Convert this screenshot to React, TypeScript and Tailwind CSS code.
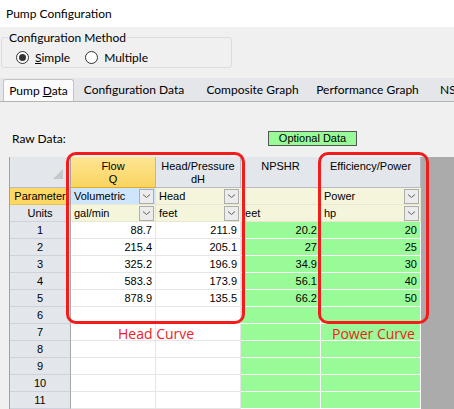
import React from 'react'

// ── Data ─────────────────────────────────────────────────────

const rows: [string, string, string, string][] = [
  ['88.7', '211.9', '20.2', '20'],
  ['215.4', '205.1', '27', '25'],
  ['325.2', '196.9', '34.9', '30'],
  ['583.3', '173.9', '56.1', '40'],
  ['878.9', '135.5', '66.2', '50'],
  ['', '', '', ''],
  ['', '', '', ''],
  ['', '', '', ''],
  ['', '', '', ''],
  ['', '', '', ''],
  ['', '', '', ''],
]

const tabs = [
  { label: 'Configuration Data', w: 'w-[120px]' },
  { label: 'Composite Graph', w: 'w-[117px]' },
  { label: 'Performance Graph', w: 'w-[113px]' },
]

// ── Small parts ──────────────────────────────────────────────

function Radio({ checked }: { checked?: boolean }) {
  return (
    <span className="flex size-[13px] shrink-0 items-center justify-center rounded-full border border-[#333] bg-white">
      {checked && <span className="size-[7px] rounded-full bg-[#333]" />}
    </span>
  )
}

function DropBtn() {
  return (
    <span className="ml-auto mr-[1px] flex h-[15px] w-[15px] shrink-0 items-center justify-center border border-[#adadad] bg-[#ececec]">
      <svg width="9" height="6" viewBox="0 0 9 6">
        <path d="M1 1.5 L4.5 4.5 L8 1.5" fill="none" stroke="#606060" strokeWidth="1" />
      </svg>
    </span>
  )
}

function RowHead({ children, yellow }: { children?: React.ReactNode; yellow?: boolean }) {
  return (
    <div
      className={`flex h-[17px] items-center justify-center overflow-hidden whitespace-nowrap border-r border-b border-r-[#a7a7a7] ${
        yellow ? 'bg-[#fdd865] border-b-[#e8c04a]' : 'bg-[#e3e6eb] border-b-[#cfd3d9]'
      }`}
    >
      {children}
    </div>
  )
}

function Num({ v, green }: { v: string; green?: boolean }) {
  return (
    <div
      className={`flex h-[17px] items-center justify-end pr-[3px] border-r border-b ${
        green ? 'bg-[#98fb98] border-white' : 'bg-white border-[#e6e6e6]'
      }`}
    >
      {v}
    </div>
  )
}

function Combo({ text, bg = 'bg-[#f5f5dc]', drop = true, pl = 'pl-[3px]' }: { text?: string; bg?: string; drop?: boolean; pl?: string }) {
  return (
    <div className={`flex h-[17px] items-center overflow-hidden whitespace-nowrap border-r border-b border-[#e8e8d0] ${bg} ${pl}`}>
      <span>{text}</span>
      {drop && <DropBtn />}
    </div>
  )
}

// ── Main ─────────────────────────────────────────────────────

export default function App() {
  return (
    <div className="relative h-[409px] w-[454px] overflow-hidden bg-[#f0f0f0] font-['Lato',sans-serif] text-[12px] text-black">
      {/* Title */}
      <div className="flex h-[27px] items-center bg-white pl-[6px] text-[12px]">Pump Configuration</div>

      {/* Configuration method */}
      <fieldset className="ml-[1px] mt-[4px] h-[37px] w-[231px] rounded-[3px] border border-[#dcdcdc] pl-[6px]">
        <legend className="px-[1px] leading-[13px]">Configuration Method</legend>
        <div className="mt-[7px] flex items-center pl-[8px] leading-[13px]">
          <Radio checked />
          <span className="ml-[6px]">
            <span className="underline">S</span>imple
          </span>
          <span className="ml-[15px]">
            <Radio />
          </span>
          <span className="ml-[6px]">Multiple</span>
        </div>
      </fieldset>

      {/* Tabs */}
      <div className="mt-[10px] flex h-[24px] items-end overflow-hidden border-b border-[#b4b4b4] bg-[#e4e6ea] pl-[3px]">
        <div className="-mb-px flex h-[23px] w-[71px] shrink-0 items-center justify-center whitespace-nowrap rounded-t-[3px] border border-b-0 border-[#c4c4c4] bg-[#fbfbfb]">
          <span>
            Pump <span className="underline">D</span>ata
          </span>
        </div>
        {tabs.map((t) => (
          <div key={t.label} className={`flex h-[23px] shrink-0 items-center justify-center whitespace-nowrap ${t.w}`}>
            {t.label}
          </div>
        ))}
        <div className="flex h-[23px] shrink-0 items-center whitespace-nowrap pl-[16px]">NSPSHR</div>
      </div>

      {/* Raw data row */}
      <div className="mt-[29px] flex h-[15px] items-center">
        <span className="w-[268px] shrink-0 pl-[12px]">Raw Data:</span>
        <span className="flex h-[15px] w-[89px] items-center justify-center border border-[#555] bg-[#98fb98] font-['Liberation_Sans',sans-serif] text-[11px]">
          Optional Data
        </span>
      </div>

      {/* Grid */}
      <div className="ml-[9px] mt-[11px] h-[260px] bg-[#ababab] font-['Liberation_Sans',sans-serif] text-[11px] leading-[13px]">
        <div className="grid w-[411px] grid-cols-[61px_85px_85px_80px_100px] border-l border-[#a0a0a0]">
          {/* Header row */}
          <div className="relative h-[31px] border-r border-b border-r-[#a7a7a7] border-b-[#b9bcc0] bg-[#e3e6eb]">
            <svg className="absolute left-[43px] top-[12px]" width="10" height="10" viewBox="0 0 10 10">
              <path d="M10 0 L10 10 L0 10 Z" fill="#c5c7ca" />
            </svg>
          </div>
          <div className="flex h-[31px] flex-col items-center border-r border-b border-r-[#e0b84a] border-b-[#e2a92a] bg-gradient-to-b from-[#fde592] to-[#f9d45e] pt-[3px]">
            <span>Flow</span>
            <span>Q</span>
          </div>
          <div className="flex h-[31px] flex-col items-center border-r border-b border-[#b9bcc0] bg-[#e3e6eb] pt-[3px]">
            <span>Head/Pressure</span>
            <span>dH</span>
          </div>
          <div className="flex h-[31px] flex-col items-center border-r border-b border-[#b9bcc0] bg-[#e3e6eb] pt-[3px]">
            <span>NPSHR</span>
          </div>
          <div className="flex h-[31px] flex-col items-center border-r border-b border-[#b9bcc0] bg-[#e3e6eb] pt-[3px]">
            <span>Efficiency/Power</span>
          </div>

          {/* Parameter row */}
          <RowHead yellow>Parameter</RowHead>
          <Combo text="Volumetric" bg="bg-[#cde6fb]" />
          <Combo text="Head" />
          <Combo drop={false} />
          <Combo text="Power" />

          {/* Units row */}
          <RowHead>Units</RowHead>
          <Combo text="gal/min" />
          <Combo text="feet" />
          <Combo text="feet" drop={false} pl="pl-[1px]" />
          <Combo text="hp" />

          {/* Data rows */}
          {rows.map((r, i) => (
            <React.Fragment key={i}>
              <RowHead>{i + 1}</RowHead>
              <Num v={r[0]} />
              <Num v={r[1]} />
              <Num v={r[2]} green />
              <Num v={r[3]} green />
            </React.Fragment>
          ))}
        </div>
      </div>

      {/* Annotations */}
      <div className="absolute left-[66px] top-[152px] h-[172px] w-[179px] rounded-[10px] border-[3px] border-[#f21c1c]" />
      <div className="absolute left-[318px] top-[152px] h-[172px] w-[111px] rounded-[10px] border-[3px] border-[#f21c1c]" />
      <span className="absolute left-[118px] top-[325px] font-['Open_Sans',sans-serif] text-[14px] leading-[18px] text-[#ee1c24]">Head Curve</span>
      <span className="absolute left-[332px] top-[325px] font-['Open_Sans',sans-serif] text-[14px] leading-[18px] text-[#ee1c24]">Power Curve</span>
    </div>
  )
}
